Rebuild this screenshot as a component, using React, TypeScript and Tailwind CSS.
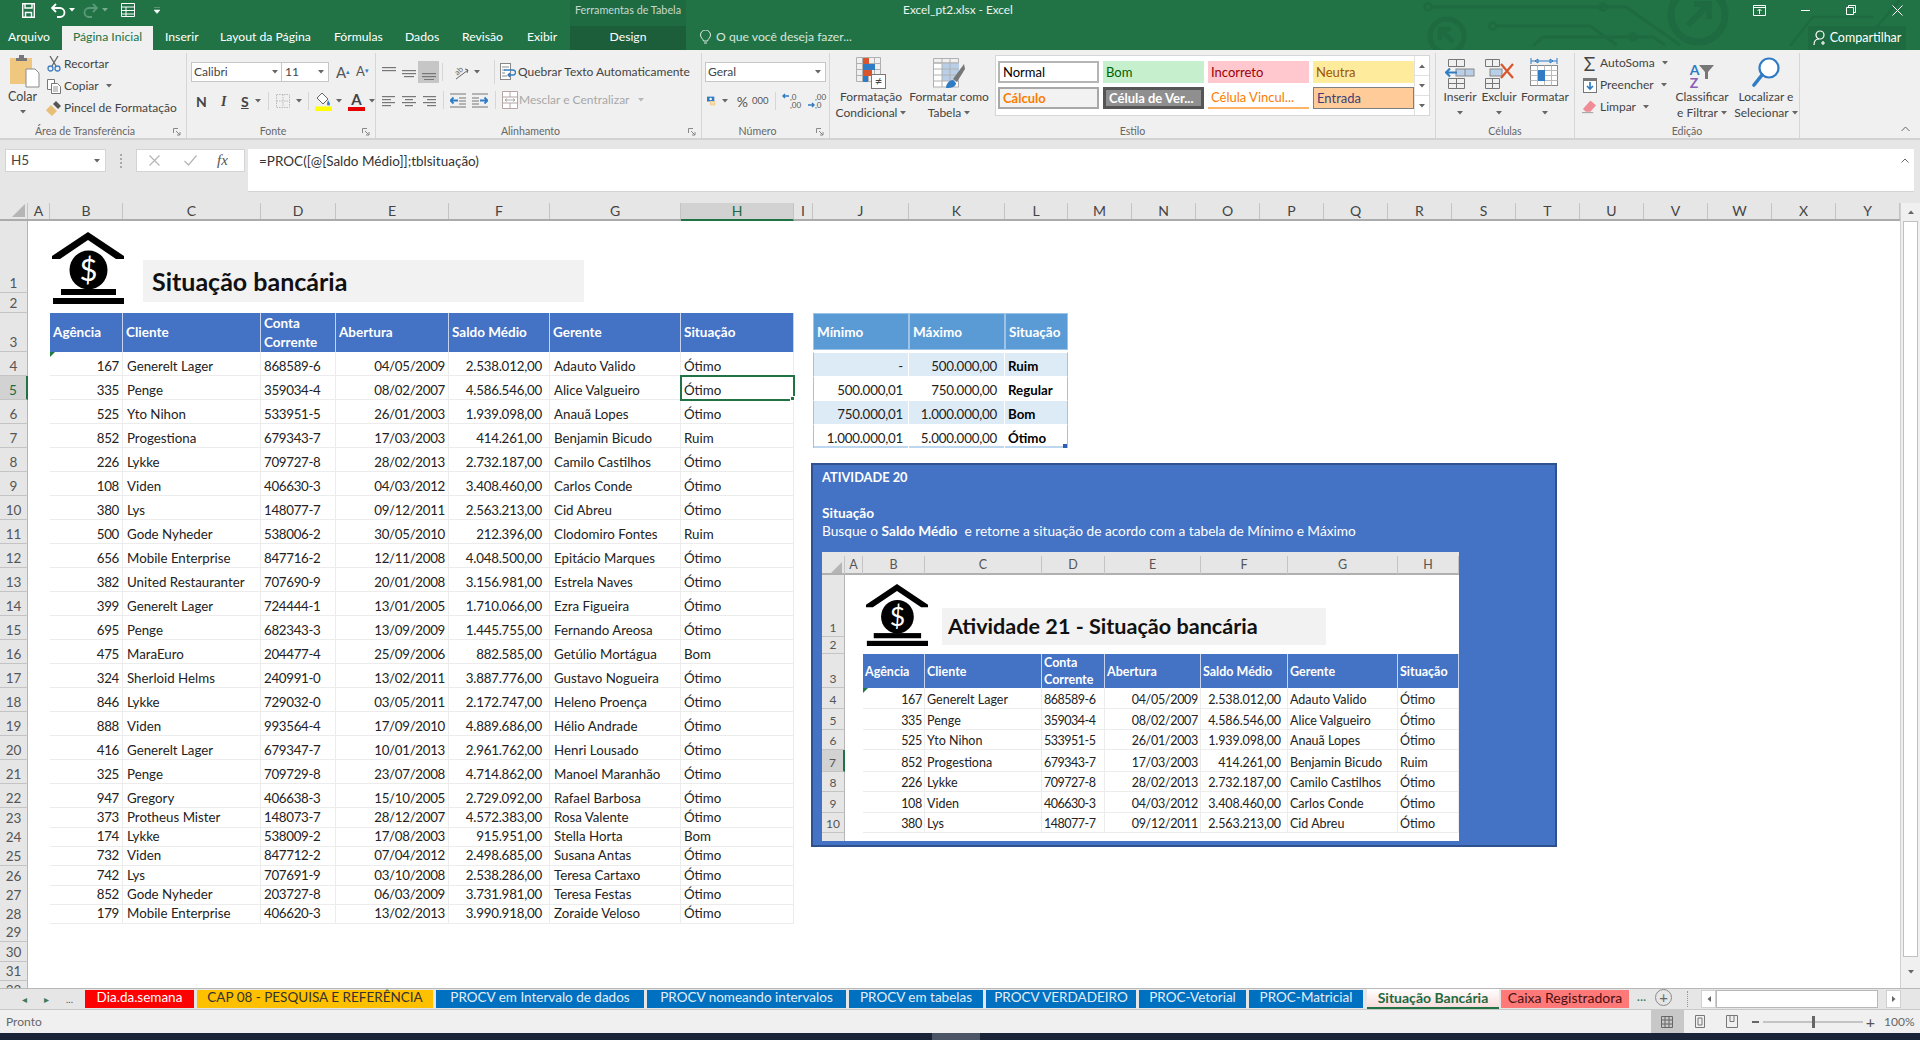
import type { ReactNode } from "react";

const COLS =
  "grid grid-cols-[28px_22px_73px_138px_75px_113px_101px_131px_113px_19px_96px_96px_63px_repeat(13,64px)]";
const MINI_COLS = "grid grid-cols-[23px_18px_62px_117px_63px_96px_87px_110px_61px]";

const DATA: string[][] = [
  ["167", "Generelt Lager", "868589-6", "04/05/2009", "2.538.012,00", "Adauto Valido", "Ótimo"],
  ["335", "Penge", "359034-4", "08/02/2007", "4.586.546,00", "Alice Valgueiro", "Ótimo"],
  ["525", "Yto Nihon", "533951-5", "26/01/2003", "1.939.098,00", "Anauã Lopes", "Ótimo"],
  ["852", "Progestiona", "679343-7", "17/03/2003", "414.261,00", "Benjamin Bicudo", "Ruim"],
  ["226", "Lykke", "709727-8", "28/02/2013", "2.732.187,00", "Camilo Castilhos", "Ótimo"],
  ["108", "Viden", "406630-3", "04/03/2012", "3.408.460,00", "Carlos Conde", "Ótimo"],
  ["380", "Lys", "148077-7", "09/12/2011", "2.563.213,00", "Cid Abreu", "Ótimo"],
  ["500", "Gode Nyheder", "538006-2", "30/05/2010", "212.396,00", "Clodomiro Fontes", "Ruim"],
  ["656", "Mobile Enterprise", "847716-2", "12/11/2008", "4.048.500,00", "Epitácio Marques", "Ótimo"],
  ["382", "United Restauranter", "707690-9", "20/01/2008", "3.156.981,00", "Estrela Naves", "Ótimo"],
  ["399", "Generelt Lager", "724444-1", "13/01/2005", "1.710.066,00", "Ezra Figueira", "Ótimo"],
  ["695", "Penge", "682343-3", "13/09/2009", "1.445.755,00", "Fernando Areosa", "Ótimo"],
  ["475", "MaraEuro", "204477-4", "25/09/2006", "882.585,00", "Getúlio Mortágua", "Bom"],
  ["324", "Sherloid Helms", "240991-0", "13/02/2011", "3.887.776,00", "Gustavo Nogueira", "Ótimo"],
  ["846", "Lykke", "729032-0", "03/05/2011", "2.172.747,00", "Heleno Proença", "Ótimo"],
  ["888", "Viden", "993564-4", "17/09/2010", "4.889.686,00", "Hélio Andrade", "Ótimo"],
  ["416", "Generelt Lager", "679347-7", "10/01/2013", "2.961.762,00", "Henri Lousado", "Ótimo"],
  ["325", "Penge", "709729-8", "23/07/2008", "4.714.862,00", "Manoel Maranhão", "Ótimo"],
  ["947", "Gregory", "406638-3", "15/10/2005", "2.729.092,00", "Rafael Barbosa", "Ótimo"],
  ["373", "Protheus Mister", "148073-7", "28/12/2007", "4.572.383,00", "Rosa Valente", "Ótimo"],
  ["174", "Lykke", "538009-2", "17/08/2003", "915.951,00", "Stella Horta", "Bom"],
  ["732", "Viden", "847712-2", "07/04/2012", "2.498.685,00", "Susana Antas", "Ótimo"],
  ["742", "Lys", "707691-9", "03/10/2008", "2.538.286,00", "Teresa Cartaxo", "Ótimo"],
  ["852", "Gode Nyheder", "203727-8", "06/03/2009", "3.731.981,00", "Teresa Festas", "Ótimo"],
  ["179", "Mobile Enterprise", "406620-3", "13/02/2013", "3.990.918,00", "Zoraide Veloso", "Ótimo"],
];

const RANGES = [
  ["-", "500.000,00", "Ruim"],
  ["500.000,01", "750.000,00", "Regular"],
  ["750.000,01", "1.000.000,00", "Bom"],
  ["1.000.000,01", "5.000.000,00", "Ótimo"],
];

const COL_LETTERS = ["A", "B", "C", "D", "E", "F", "G", "H", "I", "J", "K", "L", "M", "N", "O", "P", "Q", "R", "S", "T", "U", "V", "W", "X", "Y"];
const HEADERS = ["Agência", "Cliente", "Conta Corrente", "Abertura", "Saldo Médio", "Gerente", "Situação"];

/* ---------- small icons ---------- */

function Caret({ className = "" }: { className?: string }) {
  return (
    <svg width="6" height="4" viewBox="0 0 6 4" className={`shrink-0 ${className}`}>
      <path d="M0 0h6L3 3.5z" fill="#666" />
    </svg>
  );
}

function Launcher() {
  return (
    <svg width="8" height="8" viewBox="0 0 8 8" className="absolute right-[5px] bottom-[2px]">
      <path d="M.5 5V.5H5M3 3l4 4M7 4v3H4" fill="none" stroke="#888" />
    </svg>
  );
}

function Lines({ rows, w = 16 }: { rows: number[][]; w?: number }) {
  return (
    <svg width={w} height="16" viewBox={`0 0 ${w} 16`} className="shrink-0">
      {rows.map((r, i) => (
        <rect key={i} x={r[0]} y={r[2]} width={r[1] - r[0]} height="1.2" fill="#777" />
      ))}
    </svg>
  );
}

function Logo({ className }: { className: string }) {
  return (
    <svg viewBox="0 0 72 72" className={className}>
      <path d="M36 0 72 24v3h-8L36 8 8 27H0v-3z" fill="#000" />
      <ellipse cx="36.500" cy="38" rx="19" ry="19.500" fill="#000" />
      <text x="36.500" y="49" textAnchor="middle" fontSize="31" fill="#fff" fontFamily="Lato, sans-serif">$</text>
      <rect x="9" y="57" width="55" height="6" fill="#000" />
      <rect x="1" y="66" width="71" height="6" fill="#000" />
    </svg>
  );
}

function Circuit() {
  return (
    <svg width="520" height="50" viewBox="1400 0 520 50" className="absolute right-0 top-0" fill="none" stroke="#1e6a41">
      <path d="M1431 7h172h23l54 38M1496 26h94l27 19M1533 46l10-9h110l12 8" strokeWidth="3" />
      <circle cx="1428" cy="7" r="3.500" strokeWidth="2.500" />
      <circle cx="1603" cy="7" r="3.500" strokeWidth="2.500" />
      <circle cx="1493" cy="26" r="3.500" strokeWidth="2.500" />
      <circle cx="1633" cy="37" r="3.500" strokeWidth="2.500" />
      <circle cx="1698" cy="15" r="27" strokeWidth="7" />
      <path d="M1688 25l20-20M1694 4h15v15" strokeWidth="6" />
      <circle cx="1447" cy="36" r="17" strokeWidth="5" />
      <path d="M1453 42l-12-12M1440 40V29h11" strokeWidth="4.500" />
      <path d="M1790 46l23-29h60M1860 46l40-46" strokeWidth="2.500" />
    </svg>
  );
}

function PasteIcon() {
  return (
    <svg width="30" height="34" viewBox="0 0 30 34">
      <rect x="0" y="4" width="22" height="26" fill="#efc77e" />
      <path d="M6 4h3V1h5v3h3v3H6z" fill="#777" />
      <path d="M16 15h9l4 4v14H16z" fill="#fff" stroke="#8a8a8a" />
    </svg>
  );
}

function ScissorsIcon() {
  return (
    <svg width="14" height="16" viewBox="0 0 14 16" fill="none">
      <path d="M3 0l6 10M11 0L5 10" stroke="#666" strokeWidth="1.300" />
      <circle cx="3.500" cy="12.500" r="2.500" stroke="#3f7fc0" strokeWidth="1.300" />
      <circle cx="10.500" cy="12.500" r="2.500" stroke="#3f7fc0" strokeWidth="1.300" />
    </svg>
  );
}

function CopyIcon() {
  return (
    <svg width="14" height="15" viewBox="0 0 14 15" fill="#fff" stroke="#777">
      <path d="M.5.5h7v10h-7z" />
      <path d="M4.500 4.500h6l3 3v7h-9z" />
      <path d="M6 8h5M6 10h5M6 12h5" strokeWidth=".8" />
    </svg>
  );
}

function BrushIcon() {
  return (
    <svg width="15" height="15" viewBox="0 0 15 15">
      <path d="M0 9l5-5 6 6-5 5c-2-2-5-4-6-6z" fill="#e8bf76" />
      <path d="M7 3l3-3 5 5-3 3z" fill="#555" />
    </svg>
  );
}

function BordersIcon() {
  return (
    <svg width="14" height="14" viewBox="0 0 14 14" fill="none" stroke="#bbb" strokeDasharray="1.500 1">
      <path d="M.5.5h13v13H.5zM7 .5v13M.5 7h13" />
    </svg>
  );
}

function FillIcon() {
  return (
    <svg width="17" height="19" viewBox="0 0 17 19">
      <path d="M7 1l6 6-5 5-6-6z" fill="#fff" stroke="#666" />
      <path d="M13 8c1 2 2 3 2 4a1.500 1.500 0 01-3 0c0-1 .5-2 1-4z" fill="#3f7fc0" />
      <rect x="0" y="14.500" width="17" height="4.500" fill="#ffff00" />
    </svg>
  );
}

function OrientationIcon() {
  return (
    <svg width="17" height="17" viewBox="0 0 17 17" fill="none" stroke="#666">
      <text x="3" y="10" fontSize="8" fill="#666" stroke="none" transform="rotate(-45 6 9)" fontFamily="Lato, sans-serif">ab</text>
      <path d="M3 15L15 6M12 5l3 1-1 3" />
    </svg>
  );
}

function WrapIcon() {
  return (
    <svg width="16" height="18" viewBox="0 0 16 18" fill="none">
      <rect x=".5" y=".5" width="10" height="16" stroke="#888" fill="#fff" />
      <path d="M2 4h7M2 7h3M2 10h3M2 13h5" stroke="#888" />
      <path d="M4 7h9a2 2 0 010 5H8M10 10l-2 2 2 2" stroke="#2f7cc4" strokeWidth="1.300" />
    </svg>
  );
}

function MergeIcon() {
  return (
    <svg width="16" height="18" viewBox="0 0 16 18" fill="#fff" stroke="#b5a5a5">
      <path d="M.5.5h15v17H.5zM.5 6h15M.5 12h15M8 .5V6M8 12v5.500" />
      <path d="M3 9h10M5 7.500L3 9l2 1.500M11 7.500L13 9l-2 1.500" stroke="#aaa" fill="none" />
    </svg>
  );
}

function IndentIcon({ flip }: { flip?: boolean }) {
  return (
    <svg width="16" height="15" viewBox="0 0 16 15" fill="none" className={flip ? "-scale-x-100" : ""}>
      <path d="M1 7.500h7M3.500 4.500l-3 3 3 3" stroke="#2f7cc4" strokeWidth="1.800" />
      <path d="M0 1h16M9 5h7M9 8h7M9 11h7M0 14h16" stroke="#777" />
    </svg>
  );
}

function AccountingIcon() {
  return (
    <svg width="18" height="18" viewBox="0 0 18 18">
      <rect x="0" y="0" width="15" height="10" fill="#2f7cc4" />
      <circle cx="7.500" cy="5" r="2.500" fill="#fff" />
      <rect x="6" y="9" width="11" height="9" fill="#f0cc8e" />
      <path d="M8 12h7M8 15h7" stroke="#fff" />
    </svg>
  );
}

function DecimalIcon({ down }: { down?: boolean }) {
  return (
    <svg width="22" height="16" viewBox="0 0 22 16" className="shrink-0">
      <path d={down ? "M1 12h6M5 10l2 2-2 2" : "M7 3H1M3 1L1 3l2 2"} stroke="#2f7cc4" strokeWidth="1.400" fill="none" />
      <text x="8" y="7" fontSize="8" fill="#555" fontFamily="Lato, sans-serif">{down ? ",00" : ",0"}</text>
      <text x="8" y="15" fontSize="8" fill="#555" fontFamily="Lato, sans-serif">{down ? ",0" : ",00"}</text>
    </svg>
  );
}

function CondFormatIcon() {
  return (
    <svg width="30" height="32" viewBox="0 0 30 32" fill="none">
      <path d="M.5.5h24v24H.5zM.5 6.500h24M.5 12.500h24M.5 18.500h24M6.500.5v24M12.500.5v24M18.500.5v24" stroke="#b0b0b0" />
      <rect x="7" y="1" width="6" height="6" fill="#d9552b" />
      <rect x="7" y="7" width="12" height="6" fill="#2f7cc4" />
      <rect x="7" y="13" width="9" height="6" fill="#d9552b" />
      <rect x="7" y="19" width="5" height="6" fill="#2f7cc4" />
      <rect x="15.500" y="17.500" width="14" height="14" fill="#fff" stroke="#777" />
      <text x="22.500" y="29" textAnchor="middle" fontSize="13" fill="#444" fontFamily="Lato, sans-serif">≠</text>
    </svg>
  );
}

function TableFormatIcon() {
  return (
    <svg width="32" height="32" viewBox="0 0 32 32" fill="none">
      <rect x=".5" y="6" width="25" height="24" fill="#fff" stroke="#b0b0b0" />
      <rect x="9" y="6" width="17" height="18" fill="#b9cfe8" />
      <path d="M.5 1.500h25v4.500H.5zM.5 12h25M.5 18h25M.5 24h25M9 1.500V30M17 1.500V30" stroke="#b0b0b0" />
      <path d="M31 7l-11 15 4 3L32 12z" fill="#777" />
      <path d="M13 31c0-4 3-8 7-8l3 3c0 3-3 5-10 5z" fill="#2f7cc4" />
    </svg>
  );
}

function InsertIcon() {
  return (
    <svg width="30" height="30" viewBox="0 0 30 30" fill="none">
      <path d="M3.500.5h16v7h-16zM11.500.5v7M3.500 19.500h16v10h-16zM3.500 24.500h16M11.500 19.500v10" stroke="#777" />
      <rect x="11" y="10" width="18" height="7" fill="#b9cfe8" stroke="#888" />
      <path d="M20 10v7" stroke="#888" />
      <path d="M12 13.500H1M5 9.500l-4 4 4 4" stroke="#2f7cc4" strokeWidth="2" />
    </svg>
  );
}

function DeleteIcon() {
  return (
    <svg width="30" height="30" viewBox="0 0 30 30" fill="none">
      <path d="M1.500.5h14v7h-14zM8.500.5v7M1.500 19.500h14v10h-14zM1.500 24.500h14M8.500 19.500v10" stroke="#777" />
      <rect x="6" y="10" width="12" height="7" fill="#b9cfe8" stroke="#888" />
      <path d="M17 5l12 14M29 5L17 19" stroke="#d9552b" strokeWidth="2.200" />
    </svg>
  );
}

function FormatIcon() {
  return (
    <svg width="30" height="32" viewBox="0 0 30 32" fill="none">
      <path d="M1 4h26M1 1v6M27 1v6M5 4l3-2v4zM23 4l-3-2v4z" stroke="#2f7cc4" />
      <rect x=".5" y="8.500" width="27" height="20" stroke="#888" fill="#fff" />
      <path d="M.5 13.500h27M.5 18.500h27M.5 23.500h27M7.500 8.500v20M14.500 8.500v20M21.500 8.500v20" stroke="#bbb" />
      <rect x="8" y="13" width="7" height="11" fill="#2f7cc4" />
    </svg>
  );
}

function FillDownIcon() {
  return (
    <svg width="14" height="15" viewBox="0 0 14 15" fill="none">
      <rect x=".5" y=".5" width="13" height="14" fill="#fff" stroke="#777" />
      <path d="M.5 2h13" stroke="#777" strokeWidth="2" />
      <path d="M7 4v7M4 8l3 3 3-3" stroke="#2f7cc4" strokeWidth="1.700" />
    </svg>
  );
}

function EraserIcon() {
  return (
    <svg width="16" height="14" viewBox="0 0 16 14">
      <path d="M9 0l6 5-6 7H4l-3-3z" fill="#ef8d96" />
      <path d="M0 13h12" stroke="#999" />
    </svg>
  );
}

function SearchIcon() {
  return (
    <svg width="28" height="32" viewBox="0 0 28 32" fill="none">
      <circle cx="17" cy="11" r="9.500" stroke="#2f7cc4" strokeWidth="2.200" fill="#fff" />
      <path d="M10 18L2 28" stroke="#2f7cc4" strokeWidth="3.600" strokeLinecap="round" />
    </svg>
  );
}

function TitleIcons() {
  return (
    <div className="flex items-center h-[20px] pl-[22px] text-white">
      <svg width="13" height="15" viewBox="0 0 13 15" fill="none" stroke="#fff" strokeWidth="1.400">
        <path d="M.7.7h11.600v13.600H.7zM3 1v4h7V1M3.500 14V9.500h6V14" />
      </svg>
      <svg width="15" height="15" viewBox="0 0 15 15" fill="none" stroke="#fff" strokeWidth="1.800" className="ml-[16px]">
        <path d="M5 1L1 5l4 4M1 5h8a4.500 4.500 0 010 9H6" />
      </svg>
      <Caret className="ml-[3px] [&_path]:fill-white" />
      <svg width="15" height="15" viewBox="0 0 15 15" fill="none" stroke="#5a9a78" strokeWidth="1.800" className="ml-[8px]">
        <path d="M10 1l4 4-4 4M14 5H6a4.500 4.500 0 000 9h3" />
      </svg>
      <Caret className="ml-[4px] opacity-40 [&_path]:fill-white" />
      <svg width="14" height="14" viewBox="0 0 14 14" fill="none" stroke="#fff" className="ml-[13px]">
        <path d="M.5.5h13v13H.5zM.5 4h13M.5 7.500h13M.5 11h13M5 4v10" />
      </svg>
      <svg width="6" height="7" viewBox="0 0 6 7" className="ml-[19px]">
        <path d="M0 0h6M0 3h6L3 6.500z" fill="#fff" stroke="#fff" strokeWidth=".5" />
      </svg>
    </div>
  );
}

/* ---------- ribbon helpers ---------- */

function Group({ className, label, launcher, children }: { className: string; label: string; launcher?: boolean; children: ReactNode }) {
  return (
    <div className={`relative flex flex-col h-[85px] mt-[3px] border-r border-[#d6d6d6] shrink-0 ${className}`}>
      <div className="flex-1 min-h-0">{children}</div>
      <div className={`h-[14px] text-center text-[10.6px] leading-[14px] text-[#666] ${launcher ? "pr-[16px]" : ""}`}>{label}</div>
      {launcher && <Launcher />}
    </div>
  );
}

function BigButton({ className, icon, lines, caret }: { className: string; icon: ReactNode; lines: string[]; caret?: boolean }) {
  return (
    <div className={`flex flex-col items-center shrink-0 ${className}`}>
      <div className="h-[36px] flex items-end justify-center">{icon}</div>
      <div className="text-[12px] leading-[16px] text-[#444] text-center whitespace-nowrap">
        {lines[0]}
        {lines[1] ? (
          <div className="flex items-center justify-center gap-[3px]">
            {lines[1]}
            {caret && <Caret />}
          </div>
        ) : (
          <div className="flex items-center justify-center h-[16px]">
            <Caret />
          </div>
        )}
      </div>
    </div>
  );
}

function SmallRow({ icon, text, caret, gap = "gap-[3px]" }: { icon: ReactNode; text: string; caret?: boolean; gap?: string }) {
  return (
    <div className={`flex items-center h-[22px] text-[12px] text-[#444] ${gap}`}>
      <div className="w-[15px] flex justify-center shrink-0">{icon}</div>
      <span className="whitespace-nowrap">{text}</span>
      {caret && <Caret className="ml-[4px]" />}
    </div>
  );
}

function StyleChip({ className, children }: { className: string; children: ReactNode }) {
  return <div className={`w-[101px] h-[22px] px-[3px] flex items-center text-[13px] leading-none whitespace-nowrap overflow-hidden ${className}`}>{children}</div>;
}

function Ribbon() {
  return (
    <div className="flex h-[88px] bg-[#f0f0f0] text-[#444] shrink-0">
      <Group className="w-[187px]" label="Área de Transferência" launcher>
        <div className="flex">
          <div className="w-[46px] pl-[10px] flex flex-col items-start">
            <div className="mt-[1px]"><PasteIcon /></div>
            <div className="mt-[1px] text-[12.5px] leading-[16px] -ml-[2px]">Colar</div>
            <Caret className="ml-[10px] mt-[5px]" />
          </div>
          <div>
            <SmallRow icon={<ScissorsIcon />} text="Recortar" />
            <SmallRow icon={<CopyIcon />} text="Copiar" caret />
            <SmallRow icon={<BrushIcon />} text="Pincel de Formatação" />
          </div>
        </div>
      </Group>

      <Group className="w-[189px]" label="Fonte" launcher>
        <div className="pt-[9px] pl-[4px]">
          <div className="flex items-center h-[20px]">
            <div className="w-[91px] h-[20px] bg-white border border-[#c6c6c6] flex items-center justify-between px-[2px] text-[12px]">Calibri<Caret className="mr-[1px]" /></div>
            <div className="w-[47px] h-[20px] bg-white border border-l-0 border-[#c6c6c6] flex items-center justify-between px-[3px] text-[12px]">11<Caret className="mr-[1px]" /></div>
            <span className="ml-[7px] text-[15px] text-[#555] w-[20px]">A<sup className="text-[#2f7cc4] text-[7px]">▴</sup></span>
            <span className="text-[13px] text-[#555]">A<sup className="text-[#2f7cc4] text-[7px]">▾</sup></span>
          </div>
          <div className="flex items-center h-[20px] mt-[9px] pl-[5px]">
            <span className="font-bold text-[14px] w-[25px]">N</span>
            <span className="italic font-bold text-[14px] font-[serif] w-[20px]">I</span>
            <span className="font-bold text-[14px] underline w-[14px]">S</span>
            <Caret />
            <div className="w-[1px] h-[18px] bg-[#d6d6d6] mx-[7px]" />
            <BordersIcon />
            <Caret className="ml-[6px]" />
            <div className="w-[1px] h-[18px] bg-[#d6d6d6] mx-[6px]" />
            <FillIcon />
            <Caret className="ml-[4px]" />
            <div className="relative w-[17px] h-[19px] ml-[6px] flex justify-center">
              <span className="text-[15px] leading-[15px] font-bold">A</span>
              <div className="absolute bottom-0 inset-x-0 h-[4px] bg-[#e60000]" />
            </div>
            <Caret className="ml-[4px]" />
          </div>
        </div>
      </Group>

      <Group className="w-[326px]" label="Alinhamento" launcher>
        <div className="pt-[8px] pl-[5px]">
          <div className="flex items-center h-[22px] text-[12px]">
            <Lines rows={[[1, 15, 3], [1, 15, 6]]} />
            <div className="ml-[4px]"><Lines rows={[[1, 15, 6], [1, 15, 9], [3, 13, 12]]} /></div>
            <div className="ml-[1px] w-[21px] h-[22px] bg-[#c6c6c6] flex items-center justify-center">
              <Lines rows={[[1, 15, 9], [1, 15, 12], [3, 13, 15]]} />
            </div>
            <div className="w-[1px] h-[18px] bg-[#d6d6d6] ml-[3px] mr-[10px]" />
            <OrientationIcon />
            <Caret className="ml-[4px]" />
            <div className="w-[1px] h-[24px] bg-[#d6d6d6] ml-[14px] mr-[5px]" />
            <WrapIcon />
            <span className="ml-[2px] whitespace-nowrap">Quebrar Texto Automaticamente</span>
          </div>
          <div className="flex items-center h-[22px] mt-[6px] text-[12px]">
            <Lines rows={[[1, 14, 4], [1, 10, 7], [1, 14, 10], [1, 10, 13]]} />
            <div className="ml-[4px]"><Lines rows={[[1, 15, 4], [4, 12, 7], [1, 15, 10], [4, 12, 13]]} /></div>
            <div className="ml-[4px]"><Lines rows={[[2, 15, 4], [6, 15, 7], [2, 15, 10], [6, 15, 13]]} /></div>
            <div className="w-[1px] h-[18px] bg-[#d6d6d6] ml-[6px] mr-[6px]" />
            <IndentIcon />
            <div className="ml-[6px]"><IndentIcon flip /></div>
            <div className="w-[1px] h-[18px] bg-[#d6d6d6] ml-[7px] mr-[6px]" />
            <MergeIcon />
            <span className="ml-[1px] whitespace-nowrap text-[#a8a8a8]">Mesclar e Centralizar</span>
            <Caret className="ml-[9px] opacity-40" />
          </div>
        </div>
      </Group>

      <Group className="w-[128px]" label="Número" launcher>
        <div className="pt-[9px] pl-[3px]">
          <div className="w-[121px] h-[20px] bg-white border border-[#c6c6c6] flex items-center justify-between px-[2px] text-[12px]">Geral<Caret className="mr-[2px]" /></div>
          <div className="flex items-center h-[20px] mt-[9px] pl-[2px]">
            <AccountingIcon />
            <Caret className="ml-[6px]" />
            <span className="ml-[9px] text-[14px] text-[#555]">%</span>
            <span className="ml-[4px] text-[9.5px] text-[#555]">000</span>
            <div className="w-[1px] h-[18px] bg-[#d6d6d6] ml-[6px] mr-[7px]" />
            <DecimalIcon />
            <div className="ml-[3px]"><DecimalIcon down /></div>
          </div>
        </div>
      </Group>

      <Group className="w-[606px]" label="Estilo">
        <div className="flex pl-[2px]">
          <BigButton className="w-[78px]" icon={<CondFormatIcon />} lines={["Formatação", "Condicional"]} caret />
          <BigButton className="w-[78px]" icon={<TableFormatIcon />} lines={["Formatar como", "Tabela"]} caret />
          <div className="ml-[7px] mt-[2px] w-[435px] h-[61px] bg-white border border-[#d6d6d6] flex">
            <div className="w-[418px] pl-[2px] pt-[5px] grid grid-cols-[repeat(4,101px)] content-start gap-x-[4px] gap-y-[4px]">
              <StyleChip className="bg-white border-2 border-[#b5b5b5] text-black">Normal</StyleChip>
              <StyleChip className="bg-[#c6efce] text-[#006100]">Bom</StyleChip>
              <StyleChip className="bg-[#ffc7ce] text-[#9c0006]">Incorreto</StyleChip>
              <StyleChip className="bg-[#ffeb9c] text-[#9c5700]">Neutra</StyleChip>
              <StyleChip className="bg-[#f2f2f2] border-2 border-[#a8a8a8] text-[#fa7d00] font-bold">Cálculo</StyleChip>
              <StyleChip className="bg-[#8f8f8f] border-[3px] border-[#555] text-white font-bold">Célula de Ver...</StyleChip>
              <StyleChip className="bg-white border-b-2 border-[#ffb366] text-[#fa7d00]">Célula Vincul...</StyleChip>
              <StyleChip className="bg-[#ffcc99] border border-[#7f7f7f] text-[#3f3f76]">Entrada</StyleChip>
            </div>
            <div className="flex-1 flex flex-col border-l border-[#e0e0e0]">
              <div className="flex-1 flex items-center justify-center border-b border-[#e0e0e0]"><Caret className="rotate-180" /></div>
              <div className="flex-1 flex items-center justify-center border-b border-[#e0e0e0]"><Caret /></div>
              <div className="flex-1 flex items-center justify-center"><Caret /></div>
            </div>
          </div>
        </div>
      </Group>

      <Group className="w-[139px]" label="Células">
        <div className="flex pl-[5px]">
          <BigButton className="w-[38px]" icon={<InsertIcon />} lines={["Inserir"]} />
          <BigButton className="w-[40px]" icon={<DeleteIcon />} lines={["Excluir"]} />
          <BigButton className="w-[48px] ml-[2px]" icon={<FormatIcon />} lines={["Formatar"]} />
        </div>
      </Group>

      <Group className="w-[225px]" label="Edição">
        <div className="flex pl-[7px]">
          <div className="w-[96px] -mt-[1px]">
            <SmallRow icon={<span className="text-[19px] leading-none text-[#444]">Σ</span>} text="AutoSoma" caret />
            <SmallRow icon={<FillDownIcon />} text="Preencher" caret />
            <SmallRow icon={<EraserIcon />} text="Limpar" caret />
          </div>
          <BigButton
            className="w-[62px] ml-[-1px]"
            icon={
              <div className="flex items-center">
                <div className="flex flex-col text-[14px] leading-[13px] font-bold">
                  <span className="text-[#2f7cc4]">A</span>
                  <span className="text-[#8b5fb8]">Z</span>
                </div>
                <svg width="15" height="14" viewBox="0 0 15 14" className="-mt-[8px]"><path d="M0 0h15L9 7v7H6V7z" fill="#777" /></svg>
              </div>
            }
            lines={["Classificar", "e Filtrar"]}
            caret
          />
          <BigButton className="w-[66px]" icon={<SearchIcon />} lines={["Localizar e", "Selecionar"]} caret />
        </div>
      </Group>

      <div className="flex-1 flex items-end justify-end pr-[10px] pb-[6px]">
        <svg width="9" height="6" viewBox="0 0 9 6" fill="none" stroke="#666"><path d="M.5 5l4-4 4 4" /></svg>
      </div>
    </div>
  );
}

/* ---------- sheet ---------- */

function RowHead({ n, selected }: { n: number; selected?: boolean }) {
  return (
    <div
      className={`flex justify-center items-end text-[13.5px] leading-[18px] border-b border-[#c4c4c4] ${
        selected ? "bg-[#d2d2d2] border-r-2 border-r-[#217346] text-[#1e6a41]" : "bg-[#e6e6e6] border-r border-r-[#b5b5b5] text-[#555]"
      }`}
    >
      {n}
    </div>
  );
}

function HeadCell({ children, small }: { children: ReactNode; small?: boolean }) {
  return (
    <div className={`flex items-center bg-[#4472c4] border-r border-[#c5d3ec] text-white font-bold ${small ? "px-[2px] text-[12.5px] leading-[17px]" : "px-[3px] text-[13.5px] leading-[19px]"}`}>
      <span>{children}</span>
    </div>
  );
}

function DataCell({
  value,
  right,
  pr = "pr-[3px]",
  pl = "pl-[3px]",
  sel,
  small,
  track = "",
  lead = "leading-[19px]",
}: {
  value: string;
  right?: boolean;
  pr?: string;
  pl?: string;
  sel?: boolean;
  small?: boolean;
  track?: string;
  lead?: string;
}) {
  return (
    <div
      className={`relative flex items-end whitespace-nowrap border-b border-r border-[#ececec] text-[#222] ${pr} ${pl} ${track} ${right ? "justify-end" : ""} ${
        small ? "text-[12.5px] leading-[16px]" : `text-[13.3px] ${lead}`
      } ${sel ? "outline-2 -outline-offset-1 outline-[#217346] z-10" : ""}`}
    >
      {value}
      {sel && <div className="absolute -right-[2px] -bottom-[2px] w-[5px] h-[5px] bg-[#217346] border border-white" />}
    </div>
  );
}

function Triangle({ size }: { size: number }) {
  return (
    <svg width={size} height={size} viewBox="0 0 5 5" className="absolute left-0 top-0">
      <path d="M0 0h5L0 5z" fill="#1f7a3f" />
    </svg>
  );
}

function RangeRow({ index }: { index: number }) {
  const r = RANGES[index];
  const bg = index % 2 === 0 ? "bg-[#ddebf7]" : "bg-white";
  const last = index === 3;
  const base = `flex items-end text-[13.3px] leading-[19px] border-t border-white ${bg} ${last ? "shadow-[inset_0_-2px_0_#bdd7ee]" : ""}`;
  return (
    <>
      <div className={`${base} justify-end pr-[5px] tracking-[-0.2px] border-l border-l-[#9dc3e6] border-r border-r-white text-[#222]`}>{r[0]}</div>
      <div className={`${base} justify-end pr-[7px] tracking-[-0.2px] border-r border-r-white text-[#222]`}>{r[1]}</div>
      <div className={`${base} relative pl-[3px] font-bold border-r border-r-[#9dc3e6] text-black`}>
        {r[2]}
        {last && <div className="absolute right-0 bottom-0 w-[4px] h-[4px] bg-[#2f5fb5]" />}
      </div>
    </>
  );
}

function MainRows() {
  const heights = [
    "h-[72px]", "h-[20px]", "h-[39px]",
    ...Array(19).fill("h-[24px]"),
    ...Array(9).fill("h-[19.2px]"),
    "h-[19.2px]",
  ];
  return (
    <>
      {heights.map((h: string, i: number) => {
        const n = i + 1;
        const row = n >= 4 && n <= 28 ? DATA[n - 4] : null;
        const lead = n <= 22 ? "leading-[17px]" : "leading-[19px]";
        return (
          <div key={n} className={`${COLS} ${h}`}>
            <RowHead n={n} selected={n === 5} />
            <div />
            {n === 3 && HEADERS.map((t) => <HeadCell key={t}>{t}</HeadCell>)}
            {row && (
              <>
                <div className={`relative flex items-end justify-end pr-[3px] tracking-[-0.3px] border-b border-r border-[#ececec] text-[13.3px] ${lead} text-[#222]`}>
                  {n === 4 && <Triangle size={5} />}
                  {row[0]}
                </div>
                <DataCell lead={lead} value={row[1]} pl="pl-[4px]" />
                <DataCell lead={lead} value={row[2]} track="tracking-[-0.3px]" />
                <DataCell lead={lead} value={row[3]} right track="tracking-[-0.3px]" />
                <DataCell lead={lead} value={row[4]} right pr="pr-[7px]" track="tracking-[-0.2px]" />
                <DataCell lead={lead} value={row[5]} pl="pl-[4px]" />
                <DataCell lead={lead} value={row[6]} sel={n === 5} />
              </>
            )}
            {n === 3 && (
              <>
                <div />
                {["Mínimo", "Máximo", "Situação"].map((t) => (
                  <div key={t} className="flex items-center mb-[2px] pt-[2px] px-[3px] bg-[#5b9bd5] border border-[#9dc3e6] text-white font-bold text-[13.5px]">{t}</div>
                ))}
              </>
            )}
            {n >= 4 && n <= 7 && (
              <>
                <div />
                <RangeRow index={n - 4} />
              </>
            )}
          </div>
        );
      })}
    </>
  );
}

function MiniSheet() {
  const heights = ["h-[62px]", "h-[17px]", "h-[34px]", "h-[21px]", "h-[21px]", "h-[20px]", "h-[22px]", "h-[20px]", "h-[21px]", "h-[20px]", "h-[21px]"];
  return (
    <div className="relative w-[637px] h-[289px] overflow-hidden bg-white mt-[12px]">
      <div className={`${MINI_COLS} h-[23px] pt-[4px] bg-[#e6e6e6] border-b-2 border-[#b0b0b0] text-[#555] text-[12.5px]`}>
        <div className="flex items-end justify-end pr-[2px] pb-[1px] border-r border-[#c4c4c4]">
          <svg width="11" height="11" viewBox="0 0 11 11"><path d="M11 0v11H0z" fill="#b5b5b5" /></svg>
        </div>
        {COL_LETTERS.slice(0, 8).map((c) => (
          <div key={c} className="flex items-center justify-center border-r border-[#c4c4c4]">{c}</div>
        ))}
      </div>
      {heights.map((h, i) => {
        const n = i + 1;
        const row = n >= 4 && n <= 10 ? DATA[n - 4] : null;
        return (
          <div key={n} className={`${MINI_COLS} ${h}`}>
            <div className={`flex items-end justify-center text-[12px] leading-[16px] border-b border-[#c4c4c4] ${n === 7 ? "bg-[#d2d2d2] border-r-2 border-r-[#217346]" : "bg-[#e6e6e6] border-r border-r-[#b5b5b5]"} text-[#555]`}>{n}</div>
            <div />
            {n === 3 && HEADERS.map((t) => <HeadCell key={t} small>{t}</HeadCell>)}
            {row && (
              <>
                <div className="relative flex items-end justify-end pr-[2px] tracking-[-0.3px] border-b border-r border-[#ececec] text-[12.5px] leading-[16px] text-[#222]">
                  {n === 4 && <Triangle size={5} />}
                  {row[0]}
                </div>
                <DataCell small value={row[1]} pl="pl-[2px]" />
                <DataCell small value={row[2]} pl="pl-[2px]" track="tracking-[-0.5px]" />
                <DataCell small value={row[3]} right pr="pr-[2px]" track="tracking-[-0.3px]" />
                <DataCell small value={row[4]} right pr="pr-[6px]" track="tracking-[-0.1px]" />
                <DataCell small value={row[5]} pl="pl-[2px]" />
                <DataCell small value={row[6]} pl="pl-[2px]" />
              </>
            )}
          </div>
        );
      })}
      <Logo className="absolute left-[44px] top-[32px] w-[62px] h-[62px]" />
      <div className="absolute left-[120px] top-[56px] w-[384px] h-[37px] bg-[#f2f2f2] pl-[6px] text-[21.6px] leading-[37px] font-bold text-[#111] whitespace-nowrap">
        Atividade 21 - Situação bancária
      </div>
    </div>
  );
}

function ActivityBox() {
  return (
    <div className="absolute left-[811px] top-[260px] w-[746px] h-[384px] bg-[#4472c4] border-2 border-[#2f528f] pl-[9px] pt-[3px] text-white text-[13.7px] leading-[18px]">
      <div className="font-bold text-[12.8px]">ATIVIDADE 20</div>
      <div className="h-[18px]" />
      <div className="font-bold">Situação</div>
      <div>
        Busque o <b>Saldo Médio</b>&nbsp; e retorne a situação de acordo com a tabela de Mínimo e Máximo
      </div>
      <MiniSheet />
    </div>
  );
}

function Sheet() {
  return (
    <div className="relative flex h-[785px] bg-white overflow-hidden shrink-0">
      <div className="w-[1900px] shrink-0 overflow-hidden">
        <div className={`${COLS} h-[18px] bg-[#e6e6e6] border-b-2 border-[#ababab] text-[14px] leading-[16px] text-[#444]`}>
          <div className="flex items-end justify-end pr-[2px] pb-[2px] border-r border-[#c4c4c4]">
            <svg width="13" height="13" viewBox="0 0 13 13"><path d="M13 0v13H0z" fill="#b5b5b5" /></svg>
          </div>
          {COL_LETTERS.map((c) => (
            <div key={c} className={`flex items-center justify-center border-r border-[#c4c4c4] ${c === "H" ? "bg-[#d2d2d2] -mb-[2px] border-b-2 border-b-[#217346] text-[#1e6a41]" : ""}`}>{c}</div>
          ))}
        </div>
        <MainRows />
      </div>
      <div className="w-[20px] bg-[#f0f0f0] border-l border-[#d0d0d0] flex flex-col items-center pb-[1px]">
        <div className="h-[18px] w-full flex items-center justify-center"><Caret className="rotate-180" /></div>
        <div className="flex-1 w-[15px] bg-white border border-[#c0c0c0]" />
        <div className="h-[30px] w-full flex items-center justify-center"><Caret /></div>
      </div>
      <Logo className="absolute left-[52px] top-[29px] w-[72px] h-[72px]" />
      <div className="absolute left-[143px] top-[57px] w-[441px] h-[42px] bg-[#f2f2f2] pl-[9px] text-[25px] leading-[42px] font-bold text-[#111]">
        Situação bancária
      </div>
      <ActivityBox />
    </div>
  );
}

/* ---------- bottom ---------- */

const SHEET_TABS = [
  { name: "Dia.da.semana", cls: "w-[109px] bg-[#ff0000] text-white" },
  { name: "CAP 08 - PESQUISA E REFERÊNCIA", cls: "w-[236px] bg-[#ffc000] text-[#333]" },
  { name: "PROCV em Intervalo de dados", cls: "w-[208px] bg-[#0070c0] text-[#e4eef8]" },
  { name: "PROCV nomeando intervalos", cls: "w-[199px] bg-[#0070c0] text-[#e4eef8]" },
  { name: "PROCV em tabelas", cls: "w-[134px] bg-[#0070c0] text-[#e4eef8]" },
  { name: "PROCV VERDADEIRO", cls: "w-[150px] bg-[#0070c0] text-[#e4eef8]" },
  { name: "PROC-Vetorial", cls: "w-[107px] bg-[#0070c0] text-[#e4eef8]" },
  { name: "PROC-Matricial", cls: "w-[114px] bg-[#0070c0] text-[#e4eef8]" },
];

function SheetTabs() {
  return (
    <div className="flex items-start h-[22px] bg-[#e6e6e6] border-t border-[#b8b8b8] border-b border-b-[#c8c8c8] text-[13.5px] leading-[15px] shrink-0">
      <div className="w-[85px] h-[20px] flex items-center text-[#3b7a57] text-[10px] pl-[22px] gap-[17px]">
        <span>◂</span>
        <span>▸</span>
        <span className="text-[#555]">...</span>
      </div>
      <div className="flex gap-[3px] pt-[1px]">
        {SHEET_TABS.map((t) => (
          <div key={t.name} className={`h-[18px] text-center whitespace-nowrap ${t.cls}`}>{t.name}</div>
        ))}
      </div>
      <div className="ml-[4px] w-[132px] h-[20px] bg-gradient-to-b from-white to-[#f8dcdc] border-b-2 border-[#217346] text-center font-bold text-[#1e6a41] text-[14px] leading-[17px]">Situação Bancária</div>
      <div className="ml-[2px] mt-[1px] w-[128px] h-[18px] bg-[#ff7979] text-center text-[#4a1010] text-[14px]">Caixa Registradora</div>
      <span className="ml-[2px] w-[21px] text-center text-[#3b7a57]">...</span>
      <div className="ml-[3px] w-[17px] h-[17px] rounded-full border border-[#8a8a8a] flex items-center justify-center text-[#666] text-[15px] leading-none">+</div>
      <div className="ml-[15px] mt-[2px] w-[1px] h-[16px] border-l border-dotted border-[#999]" />
      <div className="ml-[13px] mt-[1px] flex h-[18px]">
        <div className="w-[15px] bg-white border border-[#d0d0d0] flex items-center justify-center"><Caret className="rotate-90" /></div>
        <div className="w-[162px] bg-white border border-[#b8b8b8]" />
        <div className="ml-[8px] w-[15px] bg-white border border-[#d0d0d0] flex items-center justify-center"><Caret className="-rotate-90" /></div>
      </div>
    </div>
  );
}

function StatusBar() {
  return (
    <div className="flex items-center h-[23px] bg-[#f0f0f0] text-[#666] text-[12px] shrink-0">
      <span className="pl-[6px]">Pronto</span>
      <div className="ml-auto flex items-center h-full">
        <div className="w-[33px] h-full bg-[#c8c8c8] flex items-center justify-center">
          <svg width="12" height="12" viewBox="0 0 12 12" fill="none" stroke="#666"><path d="M.5.5h11v11H.5zM4 .5v11M8 .5v11M.5 4h11M.5 8h11" /></svg>
        </div>
        <svg width="10" height="13" viewBox="0 0 10 13" fill="none" stroke="#777" className="ml-[11px]"><path d="M.5.5h9v12h-9zM3 3h4v7H3z" /></svg>
        <svg width="12" height="13" viewBox="0 0 12 13" fill="none" stroke="#777" className="ml-[21px]"><path d="M.5.5h11v12H.5zM4 .5v6h4v-6" /></svg>
        <div className="ml-[14px] w-[7px] h-[2px] bg-[#666]" />
        <div className="relative ml-[4px] w-[100px] h-[2px] bg-[#c4c4c4]">
          <div className="absolute left-[49px] -top-[5px] w-[3px] h-[12px] bg-[#666]" />
        </div>
        <span className="ml-[3px] text-[16px] leading-none text-[#555]">+</span>
        <span className="ml-[9px] w-[36px] text-[12px] text-[#666]">100%</span>
      </div>
    </div>
  );
}

export default function App() {
  return (
    <div className="w-[1920px] h-[1040px] overflow-hidden flex flex-col bg-white [font-family:Lato,sans-serif]">
      <div className="relative h-[50px] bg-[#217346] text-white shrink-0 overflow-hidden">
        <Circuit />
        <div className="absolute left-[570px] top-0 w-[116px] h-[50px] bg-[#1e6b41]" />
        <div className="relative flex h-[26px]">
          <TitleIcons />
          <div className="absolute left-[570px] w-[116px] h-[26px] text-center text-[10.8px] leading-[20px] text-[#c9d8cf]">Ferramentas de Tabela</div>
          <div className="absolute left-[-4px] right-0 text-center text-[11.8px] leading-[20px] text-[#eef4f0]">Excel_pt2.xlsx - Excel</div>
          <div className="ml-auto flex items-center h-[20px]">
            <div className="w-[46px] flex justify-center">
              <svg width="13" height="11" viewBox="0 0 13 11" fill="none" stroke="#fff"><path d="M.5.500h12v10H.5zM.5 2.500h12M6.500 9V4.500M4.500 6l2-2 2 2" /></svg>
            </div>
            <div className="w-[46px] flex justify-center"><div className="w-[9px] h-[1px] bg-white" /></div>
            <div className="w-[46px] flex justify-center">
              <svg width="10" height="10" viewBox="0 0 10 10" fill="none" stroke="#fff"><path d="M.5 2.500h7v7h-7zM2.500 2.500v-2h7v7h-2" /></svg>
            </div>
            <div className="w-[46px] flex justify-center">
              <svg width="11" height="11" viewBox="0 0 11 11" fill="none" stroke="#fff"><path d="M.5.500l10 10M10.500.500l-10 10" /></svg>
            </div>
          </div>
        </div>
        <div className="relative flex h-[24px] text-[12.2px] leading-[22px]">
          <span className="pl-[8px] w-[62px]">Arquivo</span>
          <span className="w-[91px] bg-[#f0f0f0] text-[#217346] text-center">Página Inicial</span>
          <span className="w-[67px] pl-[12px]">Inserir</span>
          <span className="w-[114px]">Layout da Página</span>
          <span className="w-[71px]">Fórmulas</span>
          <span className="w-[57px]">Dados</span>
          <span className="w-[65px]">Revisão</span>
          <span className="w-[43px]">Exibir</span>
          <span className="w-[116px] text-center bg-[#1c5e3a]">Design</span>
          <div className="ml-[14px] flex items-center h-[22px] gap-[5px] text-[#d9e6de]">
            <svg width="11" height="15" viewBox="0 0 11 15" fill="none" stroke="#e0ebe4"><path d="M3.500 11C3 8.500.5 8 .5 5a5 5 0 0110 0c0 3-2.500 3.500-3 6zM4 13h3" /></svg>
            <span>O que você deseja fazer...</span>
          </div>
          <div className="absolute right-[14px] w-[98px] h-[24px] bg-[#1e6b41] flex items-center justify-center gap-[2px] text-[12.5px]">
            <svg width="15" height="16" viewBox="0 0 15 16" fill="none" stroke="#fff" strokeWidth="1.200"><circle cx="7" cy="5" r="4" /><path d="M1 15c0-4 2-6 5-6M10 11v4M8 13h4" /></svg>
            Compartilhar
          </div>
        </div>
      </div>

      <Ribbon />

      <div className="h-[65px] bg-[#e6e6e6] border-t-2 border-[#d2d2d2] pt-[9px] flex items-start shrink-0 text-[#444]">
        <div className="ml-[5px] w-[101px] h-[23px] bg-white border border-[#d4d4d4] flex items-center justify-between px-[5px] text-[13.5px]">H5<Caret /></div>
        <div className="ml-[14px] mt-[5px] h-[14px] w-[2px] border-l-2 border-dotted border-[#aaa]" />
        <div className="ml-[14px] w-[109px] h-[23px] bg-white border border-[#d4d4d4] flex items-center text-[#aaa]">
          <svg width="11" height="11" viewBox="0 0 11 11" fill="none" stroke="#b5b5b5" strokeWidth="1.200" className="ml-[12px]"><path d="M.5.500l10 10M10.500.500l-10 10" /></svg>
          <svg width="13" height="11" viewBox="0 0 13 11" fill="none" stroke="#b5b5b5" strokeWidth="1.200" className="ml-[24px]"><path d="M.5 6l4 4 8-9.500" /></svg>
          <span className="ml-[20px] font-[serif] italic text-[15px] text-[#555]">fx</span>
        </div>
        <div className="ml-[3px] w-[1666px] h-[43px] bg-white border-b border-[#d4d4d4] flex">
          <span className="pl-[11px] pt-[2px] text-[13.5px] leading-[20px] text-[#333]">=PROC([@[Saldo Médio]];tblsituação)</span>
          <svg width="8" height="5" viewBox="0 0 8 5" fill="none" stroke="#666" className="ml-auto mr-[5px] mt-[9px]"><path d="M.5 4.500l3.500-3.500 3.500 3.500" /></svg>
        </div>
      </div>

      <Sheet />
      <SheetTabs />
      <StatusBar />
      <div className="h-[7px] bg-[#1a2438] flex shrink-0">
        <div className="ml-[932px] w-[48px] bg-[#4b5566]" />
      </div>
    </div>
  );
}
